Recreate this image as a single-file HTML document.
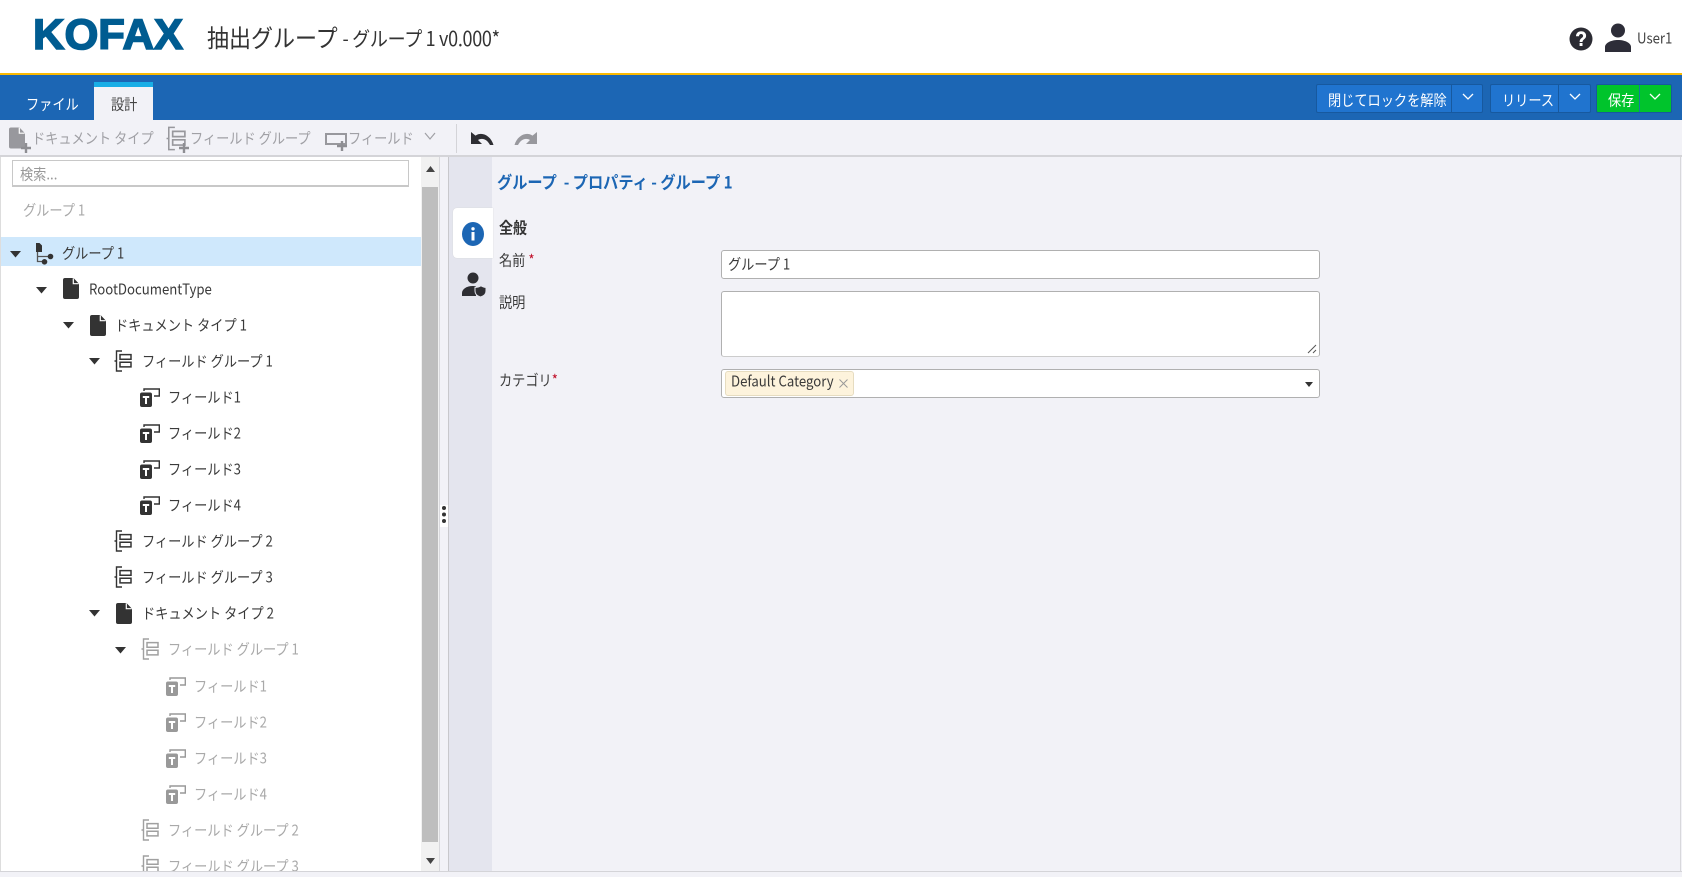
<!DOCTYPE html>
<html lang="ja"><head><meta charset="utf-8"><title>抽出グループ</title>
<style>
html,body{margin:0;padding:0;width:1682px;height:877px;overflow:hidden;background:#f2f2f7}
body{position:relative;font-family:"Noto Sans CJK JP","Liberation Sans",sans-serif;color:#3a3a3a;font-size:13.2px;filter:blur(.3px)}
.a{position:absolute;display:block}
.t{position:absolute;white-space:pre;line-height:20px;transform:scaleY(1.12);margin-top:-.8px}
.g{color:#a9a9a9}
svg{overflow:visible}
.btn{position:absolute;top:84px;height:29px;background:#2074cf;box-sizing:border-box;border:1px solid #17599f;border-radius:2px}
</style></head><body>
<svg width="0" height="0" style="position:absolute">
<symbol id="doc" viewBox="0 0 16 21"><path d="M2 0h8.500L16 5.800V19a2 2 0 0 1-2 2H2a2 2 0 0 1-2-2V2a2 2 0 0 1 2-2z" fill="currentColor"/><path d="M10.300 .3v5.400h5.400" fill="none" stroke="#fff" stroke-width="1.200"/></symbol>
<symbol id="grp" viewBox="0 0 18 22"><path d="M8 1H2.500v20H8M2.500 11H.5" fill="none" stroke="currentColor" stroke-width="1.400"/><path d="M6 4.600h11v4.700H6zM6 12.200h11v4.700H6z" fill="none" stroke="currentColor" stroke-width="1.500"/></symbol>
<symbol id="fld" viewBox="0 0 20 19"><path d="M4 3V1h15.300v7H14" fill="none" stroke="currentColor" stroke-width="1.400"/><rect x="0" y="4.500" width="12" height="14.500" rx="2" fill="currentColor"/><path d="M2.800 8h6.400v2H7v6H5v-6H2.800z" fill="#fff"/></symbol>
<symbol id="car" viewBox="0 0 11 7"><path d="M0 0h11L5.500 6.500z" fill="#333"/></symbol>
<symbol id="plus" viewBox="0 0 10 10"><path d="M5 0v10M0 5h10" stroke="#8e8e93" stroke-width="2.400"/></symbol>
</svg>

<!-- header -->
<div class="a" style="left:0;top:0;width:1682px;height:73px;background:#fff"></div>
<div class="a" style="left:0;top:73px;width:1682px;height:2px;background:#fbb900"></div>
<svg class="a" style="left:33px;top:14px" width="152" height="40"><text x="0" y="35" font-family="Liberation Sans" font-weight="700" font-size="43" textLength="150" lengthAdjust="spacingAndGlyphs" fill="#005c91" stroke="#005c91" stroke-width="1.600">KOFAX</text></svg>
<div class="t" style="left:207px;top:22.800px;font-size:22px;line-height:30px;color:#333">抽出グループ</div>
<div class="t" style="left:342.500px;top:24.800px;font-size:18px;line-height:28px;color:#333;letter-spacing:-.3px">- グループ 1 v0.000*</div>
<svg class="a" style="left:1569px;top:27px" width="24" height="24" viewBox="0 0 24 24"><circle cx="12" cy="12" r="11.500" fill="#2b2b33"/><path d="M7 9.300C7 6.300 9.200 4.300 12.100 4.300c2.900 0 5 1.700 5 4.400 0 3.500-3.600 3.500-3.600 6.300h-2.900c0-4 3.500-3.900 3.500-6.100 0-1.100-.8-1.900-2-1.900-1.300 0-2.100.9-2.100 2.300z" fill="#fff"/><rect x="10.600" y="16" width="2.900" height="3" fill="#fff"/></svg>
<svg class="a" style="left:1605px;top:23px" width="26" height="29" viewBox="0 0 26 29"><circle cx="13" cy="7.500" r="7" fill="#2d2d38"/><path d="M0 29v-5c0-4 6-7 13-7s13 3 13 7v5z" fill="#2d2d38"/></svg>
<div class="t" style="left:1637px;top:28.800px;color:#444">User1</div>

<!-- ribbon -->
<div class="a" style="left:0;top:75px;width:1682px;height:45px;background:#1c66b4"></div>
<div class="t" style="left:26px;top:94.800px;color:#fff">ファイル</div>
<div class="a" style="left:94px;top:82px;width:59px;height:38px;background:#f2f2f7"></div>
<div class="a" style="left:94px;top:82px;width:59px;height:5px;background:#19aee6"></div>
<div class="t" style="left:111px;top:94.800px;color:#444">設計</div>

<div class="btn" style="left:1316px;width:167px"></div>
<div class="a" style="left:1451px;top:84px;width:1px;height:29px;background:#17599f"></div>
<div class="t" style="left:1328px;top:91px;color:#fff">閉じてロックを解除</div>
<svg class="a" style="left:1462px;top:93px" width="12" height="7"><path d="M1 1l5 5 5-5" fill="none" stroke="#fff" stroke-width="1.300"/></svg>
<div class="btn" style="left:1490px;width:101px"></div>
<div class="a" style="left:1558px;top:84px;width:1px;height:29px;background:#17599f"></div>
<div class="t" style="left:1502px;top:91px;color:#fff">リリース</div>
<svg class="a" style="left:1569px;top:93px" width="12" height="7"><path d="M1 1l5 5 5-5" fill="none" stroke="#fff" stroke-width="1.300"/></svg>
<div class="btn" style="left:1596px;width:76px;background:#00c42c"></div>
<div class="a" style="left:1639px;top:85px;width:1px;height:27px;background:#17799f"></div>
<div class="t" style="left:1608px;top:91px;color:#fff">保存</div>
<svg class="a" style="left:1649px;top:93px" width="12" height="7"><path d="M1 1l5 5 5-5" fill="none" stroke="#fff" stroke-width="1.300"/></svg>

<!-- toolbar -->
<div class="a" style="left:0;top:155px;width:1682px;height:2px;background:#d4d4d8"></div>
<svg class="a" style="left:9px;top:126px;color:#98989d" width="16" height="24"><use href="#doc" width="16" height="24"/></svg>
<svg class="a" style="left:21px;top:143px" width="10" height="10"><use href="#plus" width="10" height="10"/></svg>
<div class="t" style="left:32px;top:129px;color:#a0a0a5">ドキュメント タイプ</div>
<svg class="a" style="left:166px;top:126px;color:#98989d" width="20" height="25"><use href="#grp" width="20" height="25"/></svg>
<svg class="a" style="left:179px;top:143px" width="10" height="10"><use href="#plus" width="10" height="10"/></svg>
<div class="t" style="left:190px;top:129px;color:#a0a0a5">フィールド グループ</div>
<svg class="a" style="left:325px;top:133px" width="22" height="12"><path d="M1 1h20v10H1z" fill="none" stroke="#98989d" stroke-width="2"/></svg>
<svg class="a" style="left:337px;top:141px" width="10" height="10"><use href="#plus" width="10" height="10"/></svg>
<div class="t" style="left:348px;top:129px;color:#a0a0a5">フィールド</div>
<svg class="a" style="left:424px;top:132px" width="12" height="8"><path d="M1 1l5 6 5-6" fill="none" stroke="#a0a0a5" stroke-width="1.200"/></svg>
<div class="a" style="left:456px;top:124px;width:1px;height:29px;background:#d4d4d8"></div>
<svg class="a" style="left:471px;top:132px" width="23" height="13" viewBox="0 0 23 13"><path d="M0 0v12h11L7 8c4-2.500 9-1 12 5h3.500C20 4 11-1 4.500 3.600z" fill="#2e2e33"/></svg>
<svg class="a" style="left:514px;top:132px" width="23" height="13" viewBox="0 0 23 13"><path d="M23 0v12H12l4-4c-4-2.500-9-1-12 5H.5C3 4 12-1 18.500 3.600z" fill="#98989d"/></svg>

<!-- left panel -->
<div class="a" style="left:0;top:157px;width:439px;height:715px;background:#fff;overflow:hidden;border-left:1px solid #ddd;box-sizing:border-box">
  <div class="a" style="left:420px;top:0;width:18px;height:715px;background:#f1f1f1"></div>
  <div class="a" style="left:421px;top:30px;width:16px;height:655px;background:#bebebe"></div>
  <svg class="a" style="left:425px;top:9px" width="9" height="6"><path d="M0 6h9L4.500 0z" fill="#444"/></svg>
  <svg class="a" style="left:425px;top:701px" width="9" height="6"><path d="M0 0h9L4.500 6z" fill="#444"/></svg>
  <div class="a" style="left:0;top:80px;width:420px;height:29px;background:#cfe8fc"></div>
</div>
<div class="a" style="left:12px;top:160px;width:397px;height:27px;box-sizing:border-box;background:#fff;border:1px solid #c8c8c8;border-bottom-width:2px"></div>
<div class="t" style="left:20px;top:165px;color:#999">検索...</div>
<div class="t" style="left:23px;top:200.500px;color:#a9a9a9">グループ 1</div>

<!-- tree rows -->
<svg class="a" style="left:10px;top:251px" width="11" height="7"><use href="#car" width="11" height="7"/></svg>
<svg class="a" style="left:35px;top:243px" width="19" height="22" viewBox="0 0 19 22"><path d="M1 0h3.500L7 2.500V9H1z" fill="#333"/><path d="M2.500 9v9.500h9M2.500 13.500h12" fill="none" stroke="#555" stroke-width="1.300"/><circle cx="15.500" cy="13.500" r="2.800" fill="#333"/><circle cx="9.500" cy="18.800" r="2.800" fill="#333"/></svg>
<div class="t" style="left:62px;top:244px">グループ 1</div>

<svg class="a" style="left:36px;top:287px" width="11" height="7"><use href="#car" width="11" height="7"/></svg>
<svg class="a" style="left:63px;top:278px;color:#333" width="16" height="21"><use href="#doc" width="16" height="21"/></svg>
<div class="t" style="left:89px;top:280px">RootDocumentType</div>

<svg class="a" style="left:63px;top:322px" width="11" height="7"><use href="#car" width="11" height="7"/></svg>
<svg class="a" style="left:90px;top:315px;color:#333" width="16" height="21"><use href="#doc" width="16" height="21"/></svg>
<div class="t" style="left:115px;top:316px">ドキュメント タイプ 1</div>

<svg class="a" style="left:89px;top:358px" width="11" height="7"><use href="#car" width="11" height="7"/></svg>
<svg class="a" style="left:114px;top:350px;color:#333" width="18" height="22"><use href="#grp" width="18" height="22"/></svg>
<div class="t" style="left:142px;top:352px">フィールド グループ 1</div>

<svg class="a" style="left:140px;top:388px;color:#333" width="20" height="19"><use href="#fld" width="20" height="19"/></svg>
<div class="t" style="left:168px;top:388px">フィールド1</div>
<svg class="a" style="left:140px;top:424px;color:#333" width="20" height="19"><use href="#fld" width="20" height="19"/></svg>
<div class="t" style="left:168px;top:424px">フィールド2</div>
<svg class="a" style="left:140px;top:460px;color:#333" width="20" height="19"><use href="#fld" width="20" height="19"/></svg>
<div class="t" style="left:168px;top:460px">フィールド3</div>
<svg class="a" style="left:140px;top:496px;color:#333" width="20" height="19"><use href="#fld" width="20" height="19"/></svg>
<div class="t" style="left:168px;top:496px">フィールド4</div>

<svg class="a" style="left:114px;top:530px;color:#333" width="18" height="22"><use href="#grp" width="18" height="22"/></svg>
<div class="t" style="left:142px;top:532px">フィールド グループ 2</div>
<svg class="a" style="left:114px;top:566px;color:#333" width="18" height="22"><use href="#grp" width="18" height="22"/></svg>
<div class="t" style="left:142px;top:568px">フィールド グループ 3</div>

<svg class="a" style="left:89px;top:610px" width="11" height="7"><use href="#car" width="11" height="7"/></svg>
<svg class="a" style="left:116px;top:603px;color:#333" width="16" height="21"><use href="#doc" width="16" height="21"/></svg>
<div class="t" style="left:142px;top:604px">ドキュメント タイプ 2</div>

<svg class="a" style="left:115px;top:647px" width="11" height="7"><use href="#car" width="11" height="7"/></svg>
<svg class="a" style="left:141px;top:638px;color:#a0a0a0" width="18" height="22"><use href="#grp" width="18" height="22"/></svg>
<div class="t g" style="left:168px;top:640px">フィールド グループ 1</div>

<svg class="a" style="left:166px;top:677px;color:#999" width="20" height="19"><use href="#fld" width="20" height="19"/></svg>
<div class="t g" style="left:194px;top:676.500px">フィールド1</div>
<svg class="a" style="left:166px;top:713px;color:#999" width="20" height="19"><use href="#fld" width="20" height="19"/></svg>
<div class="t g" style="left:194px;top:713px">フィールド2</div>
<svg class="a" style="left:166px;top:749px;color:#999" width="20" height="19"><use href="#fld" width="20" height="19"/></svg>
<div class="t g" style="left:194px;top:749px">フィールド3</div>
<svg class="a" style="left:166px;top:785px;color:#999" width="20" height="19"><use href="#fld" width="20" height="19"/></svg>
<div class="t g" style="left:194px;top:785px">フィールド4</div>

<svg class="a" style="left:141px;top:819px;color:#a0a0a0" width="18" height="22"><use href="#grp" width="18" height="22"/></svg>
<div class="t g" style="left:168px;top:821px">フィールド グループ 2</div>
<div class="a" style="left:130px;top:855px;width:200px;height:17px;overflow:hidden">
<svg class="a" style="left:11px;top:0;color:#a0a0a0" width="18" height="22"><use href="#grp" width="18" height="22"/></svg>
<div class="t g" style="left:38px;top:2px">フィールド グループ 3</div>
</div>

<!-- splitter -->
<div class="a" style="left:439px;top:157px;width:1px;height:715px;background:#d8d8dc"></div>
<div class="a" style="left:440px;top:505px;width:8px;height:22px;background:#fff"></div>
<svg class="a" style="left:441px;top:505px" width="6" height="22"><circle cx="3" cy="3" r="2" fill="#333"/><circle cx="3" cy="9.500" r="2" fill="#333"/><circle cx="3" cy="16" r="2" fill="#333"/></svg>

<!-- right panel -->
<div class="a" style="left:448px;top:157px;width:1px;height:715px;background:#c8c8cc"></div>
<div class="a" style="left:449px;top:157px;width:43px;height:715px;background:#e4e5ee"></div>
<div class="a" style="left:1680px;top:157px;width:1px;height:715px;background:#d8d8dc"></div>
<div class="a" style="left:0;top:871px;width:1682px;height:1px;background:#d4d4d8"></div>
<div class="a" style="left:453px;top:208px;width:40px;height:50px;background:#fff;border-radius:4px 0 0 4px;box-shadow:0 0 1px #ccc"></div>
<svg class="a" style="left:462px;top:222px" width="22" height="24" viewBox="0 0 22 24"><ellipse cx="11" cy="12" rx="11" ry="12" fill="#1c66b4"/><circle cx="11" cy="6.800" r="1.700" fill="#fff"/><rect x="9.500" y="10" width="3" height="8.500" fill="#fff"/></svg>
<svg class="a" style="left:462px;top:272px" width="24" height="25" viewBox="0 0 24 25"><circle cx="11" cy="6" r="5.500" fill="#2e2e33"/><path d="M0 24v-3c0-4 5-7 10.500-7 1.300 0 2.500.1 3.500.5V24z" fill="#2e2e33"/><path d="M13 15.500c3-.3 5-1 6-1.800 1 .8 3 1.500 5 1.800v3.500c0 2.800-2 5-5.500 6-3.500-1-5.500-3.200-5.500-6z" fill="#2e2e33" stroke="#e4e5ee" stroke-width="1"/></svg>

<div class="t" style="left:497px;top:173px;color:#1c66b4;font-weight:700;font-size:15.200px">グループ  - プロパティ - グループ 1</div>
<div class="t" style="left:499px;top:218.800px;font-weight:700;font-size:14px;color:#333">全般</div>
<div class="t" style="left:499px;top:251px">名前 <span style="color:#c0102a">*</span></div>
<div class="t" style="left:499px;top:293px">説明</div>
<div class="t" style="left:499px;top:370.800px">カテゴリ<span style="color:#c0102a">*</span></div>

<div class="a" style="left:721px;top:250px;width:599px;height:29px;box-sizing:border-box;background:#fff;border:1px solid #b0b0b0;border-radius:3px"></div>
<div class="t" style="left:728px;top:255px">グループ 1</div>
<div class="a" style="left:721px;top:291px;width:599px;height:66px;box-sizing:border-box;background:#fff;border:1px solid #b0b0b0;border-bottom-color:#ccc;border-radius:3px"></div>
<svg class="a" style="left:1307px;top:344px" width="10" height="10"><path d="M1 9l8-8M6 9l3-3" stroke="#555" stroke-width="1"/></svg>
<div class="a" style="left:721px;top:369px;width:599px;height:29px;box-sizing:border-box;background:#fff;border:1px solid #b0b0b0;border-radius:3px"></div>
<div class="a" style="left:725px;top:371px;width:129px;height:25px;box-sizing:border-box;background:#fdf3dc;border:1px solid #e6dcc0;border-radius:3px"></div>
<div class="t" style="left:731px;top:372px;color:#3a3a3a">Default Category</div>
<svg class="a" style="left:839px;top:379px" width="9" height="9"><path d="M.5.500l8 8M8.500.500l-8 8" stroke="#999" stroke-width="1"/></svg>
<svg class="a" style="left:1305px;top:382px" width="8" height="5"><path d="M0 0h8L4 5z" fill="#333"/></svg>
</body></html>
